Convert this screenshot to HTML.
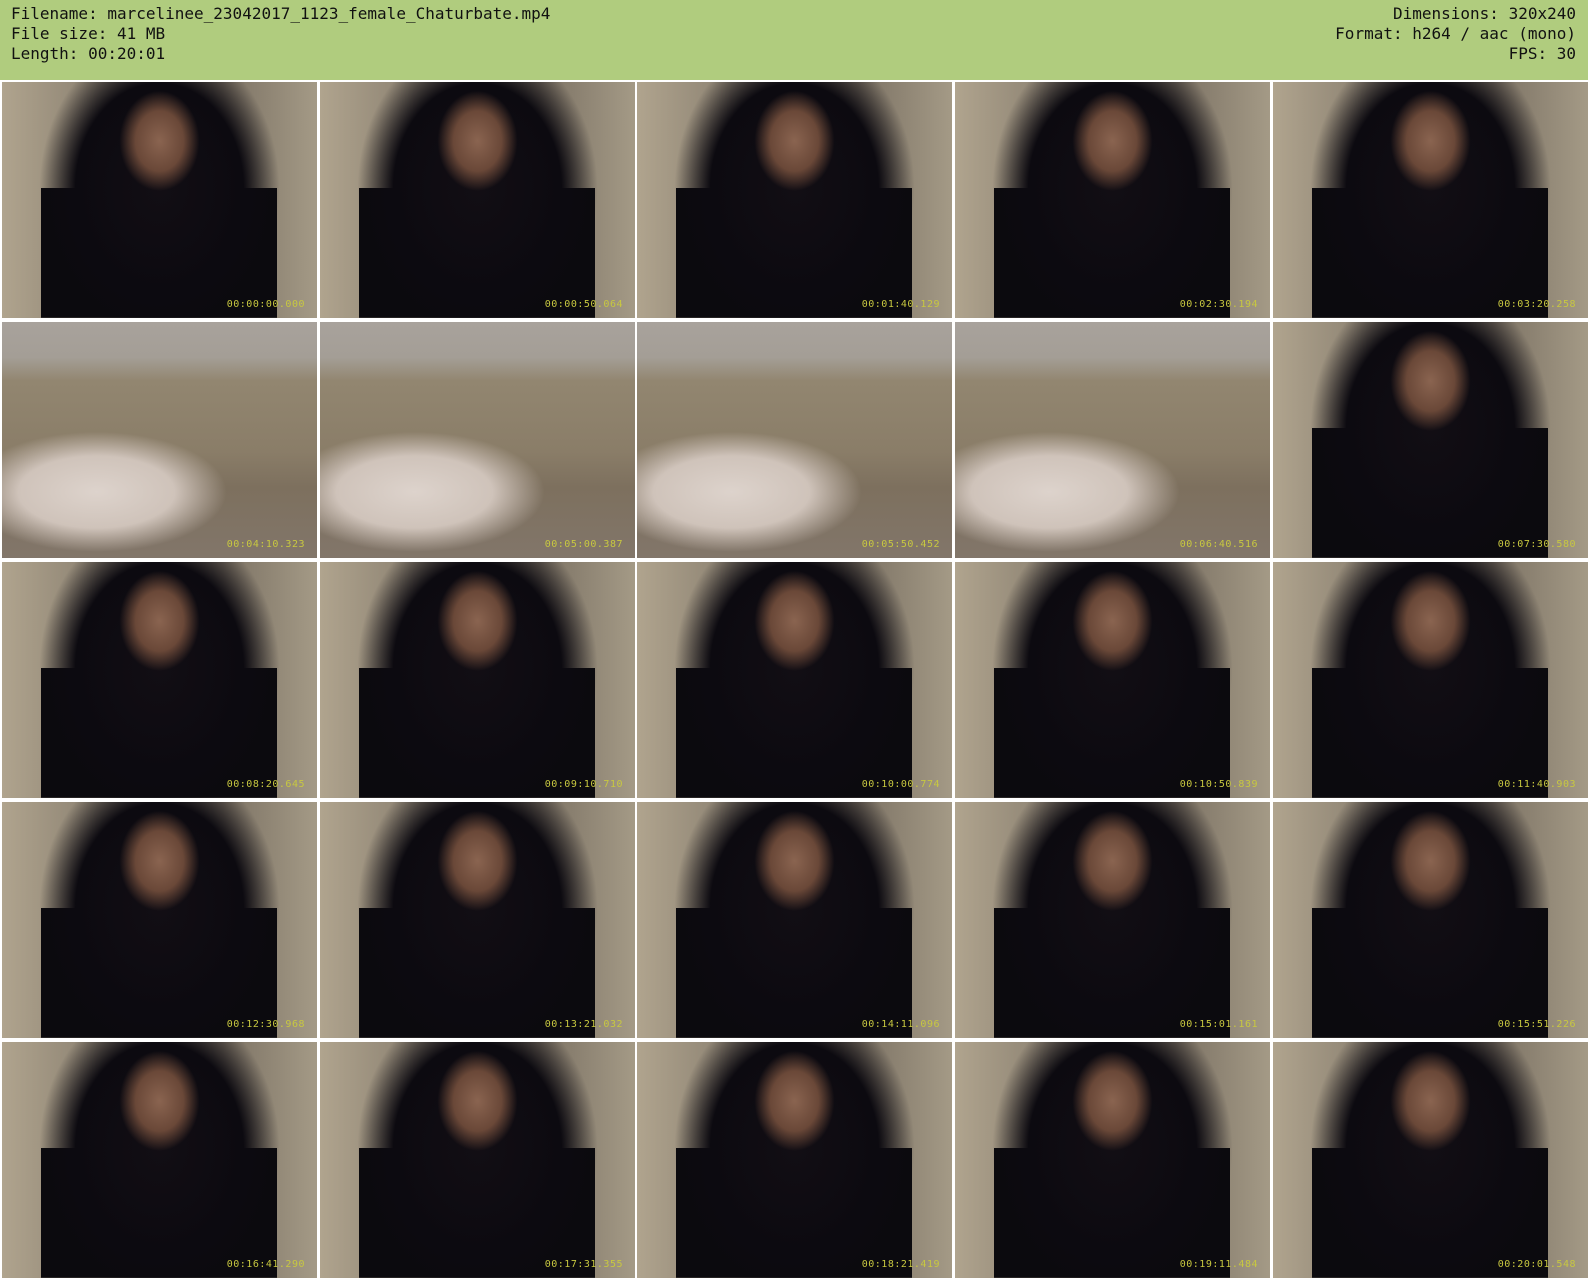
<!DOCTYPE html><html><head><style>
body{margin:0;width:1588px;height:1280px;background:#fff;overflow:hidden;font-family:"DejaVu Sans Mono","Liberation Mono",monospace}
.h{position:absolute;left:0;top:0;width:1588px;height:80px;background:#b0cc7e;color:#111;font-size:16px;line-height:20px}
.l{position:absolute;left:11px;top:4px;white-space:pre}
.r{position:absolute;right:12px;top:4px;text-align:right;white-space:pre}
.t{position:absolute;width:315px;height:236px;overflow:hidden}
.p{background:
radial-gradient(ellipse 40px 50px at 50% 25%,#8a6450 0%,#6a4838 60%,transparent 100%),
radial-gradient(ellipse 120px 150px at 50% 45%,#120e14 0%,#0c0a10 70%,transparent 100%),
linear-gradient(180deg,#0b0a0e 0%,#0b0a0e 100%) 50% 100%/75% 55% no-repeat,
linear-gradient(90deg,#b0a48e,#8c8272 30%,#7c7264 70%,#a49a86)}
.s{background:
radial-gradient(ellipse 130px 60px at 30% 72%,#ddd3cc 0%,#cfc3ba 60%,transparent 100%),
linear-gradient(180deg,#a8a29c 0%,#a49e96 15%,#928670 25%,#8a7d68 55%,#7d705e 70%,#82766a 100%)}
.ts{position:absolute;right:12px;bottom:8px;color:#c8c840;font-size:10px;letter-spacing:0.5px}
</style></head><body>
<div class="h"><div class="l">Filename: marcelinee_23042017_1123_female_Chaturbate.mp4
File size: 41 MB
Length: 00:20:01</div><div class="r">Dimensions: 320x240
Format: h264 / aac (mono)
FPS: 30</div></div>
<div class="t p" style="left:2px;top:82px"><span class="ts">00:00:00.000</span></div>
<div class="t p" style="left:320px;top:82px"><span class="ts">00:00:50.064</span></div>
<div class="t p" style="left:637px;top:82px"><span class="ts">00:01:40.129</span></div>
<div class="t p" style="left:955px;top:82px"><span class="ts">00:02:30.194</span></div>
<div class="t p" style="left:1273px;top:82px"><span class="ts">00:03:20.258</span></div>
<div class="t s" style="left:2px;top:322px"><span class="ts">00:04:10.323</span></div>
<div class="t s" style="left:320px;top:322px"><span class="ts">00:05:00.387</span></div>
<div class="t s" style="left:637px;top:322px"><span class="ts">00:05:50.452</span></div>
<div class="t s" style="left:955px;top:322px"><span class="ts">00:06:40.516</span></div>
<div class="t p" style="left:1273px;top:322px"><span class="ts">00:07:30.580</span></div>
<div class="t p" style="left:2px;top:562px"><span class="ts">00:08:20.645</span></div>
<div class="t p" style="left:320px;top:562px"><span class="ts">00:09:10.710</span></div>
<div class="t p" style="left:637px;top:562px"><span class="ts">00:10:00.774</span></div>
<div class="t p" style="left:955px;top:562px"><span class="ts">00:10:50.839</span></div>
<div class="t p" style="left:1273px;top:562px"><span class="ts">00:11:40.903</span></div>
<div class="t p" style="left:2px;top:802px"><span class="ts">00:12:30.968</span></div>
<div class="t p" style="left:320px;top:802px"><span class="ts">00:13:21.032</span></div>
<div class="t p" style="left:637px;top:802px"><span class="ts">00:14:11.096</span></div>
<div class="t p" style="left:955px;top:802px"><span class="ts">00:15:01.161</span></div>
<div class="t p" style="left:1273px;top:802px"><span class="ts">00:15:51.226</span></div>
<div class="t p" style="left:2px;top:1042px"><span class="ts">00:16:41.290</span></div>
<div class="t p" style="left:320px;top:1042px"><span class="ts">00:17:31.355</span></div>
<div class="t p" style="left:637px;top:1042px"><span class="ts">00:18:21.419</span></div>
<div class="t p" style="left:955px;top:1042px"><span class="ts">00:19:11.484</span></div>
<div class="t p" style="left:1273px;top:1042px"><span class="ts">00:20:01.548</span></div>
</body></html>
